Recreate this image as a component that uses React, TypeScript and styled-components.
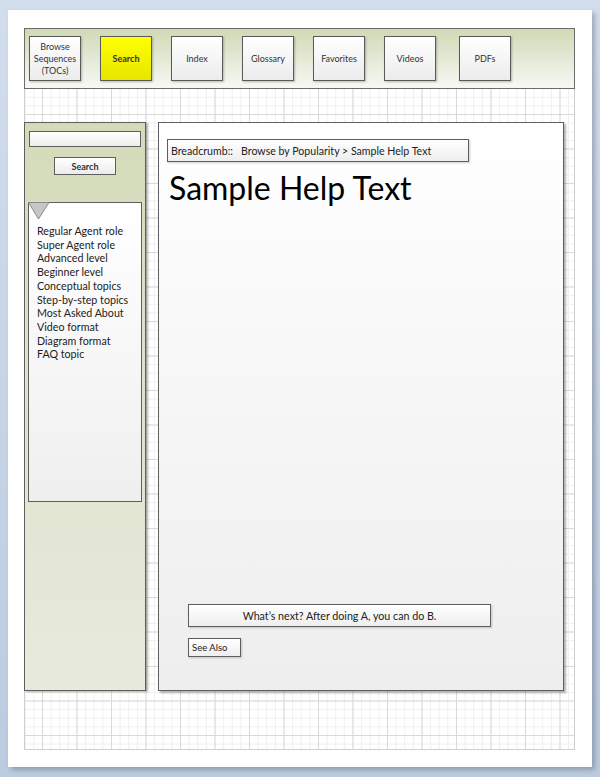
import React from "react";
import styled, { createGlobalStyle } from "styled-components";

const Global = createGlobalStyle`
  html, body { margin: 0; padding: 0; }
  body { font-family: Lato, "Open Sans", "Liberation Sans", sans-serif; }
  * { box-sizing: border-box; }
`;

const Stage = styled.div`
  width: 600px;
  height: 777px;
  padding: 10px 8px 0 8px;
  background: linear-gradient(to bottom, #d2deee, #bccbdf);
  overflow: hidden;
`;

const Paper = styled.div`
  width: 584px;
  height: 757px;
  background: #ffffff;
  padding: 18px 17px 17px 16px;
  box-shadow: 3px 3px 5px rgba(60, 70, 90, 0.35);
`;

const Canvas = styled.div`
  height: 100%;
  display: flex;
  flex-direction: column;
  background-color: #ffffff;
  background-image:
    linear-gradient(to right, #d9d9d9 1px, transparent 1px),
    linear-gradient(to bottom, #d9d9d9 1px, transparent 1px),
    linear-gradient(to right, #efefef 1px, transparent 1px),
    linear-gradient(to bottom, #efefef 1px, transparent 1px);
  background-size: 34.5px 34.5px, 34.5px 34.5px, 8.625px 8.625px, 8.625px 8.625px;
  background-position: 17px 17px;
  border-left: 1px solid #cfcfcf;
  border-right: 1px solid #cfcfcf;
  border-bottom: 1px solid #cfcfcf;
`;

const Toolbar = styled.div`
  height: 61px;
  margin-left: -1px;
  margin-right: -1px;
  border: 1px solid #6b6b6b;
  background: linear-gradient(to bottom, #d0d9b5 0%, #e4e9d6 50%, #f7f8f4 100%);
  display: flex;
  align-items: flex-start;
  padding: 7px 0 0 4px;
  gap: 19px;
`;

const NavButton = styled.div<{ $active?: boolean; $extra?: number }>`
  width: 52px;
  height: 45px;
  margin-left: ${(p) => p.$extra ?? 0}px;
  border: 1px solid #5a5a5a;
  background: ${(p) =>
    p.$active
      ? "linear-gradient(to bottom, #ffff00, #e6e600)"
      : "linear-gradient(to bottom, #ffffff, #ececec)"};
  box-shadow: 1px 1px 2px rgba(0, 0, 0, 0.25);
  display: flex;
  align-items: center;
  justify-content: center;
  text-align: center;
  font-size: 9px;
  line-height: 12px;
  font-weight: ${(p) => (p.$active ? 700 : 400)};
  color: #333333;
`;

const Body = styled.div`
  display: flex;
  margin-top: 33px;
  margin-left: -1px;
  gap: 12px;
  height: 569px;
`;

const Sidebar = styled.div`
  width: 122px;
  height: 100%;
  border: 1px solid #5e5e5e;
  background: linear-gradient(to bottom, #d3dbb9 0%, #dde2c9 40%, #e8eade 100%);
  box-shadow: 2px 1px 2px rgba(0, 0, 0, 0.3);
  display: flex;
  flex-direction: column;
  padding: 8px 3px 0 3px;
`;

const SearchInput = styled.div`
  height: 16px;
  margin: 0 1px;
  border: 1px solid #5e5e5e;
  background: linear-gradient(to bottom, #ffffff, #eeeeee);
`;

const SearchButton = styled.div`
  align-self: center;
  width: 62px;
  height: 18px;
  margin-top: 10px;
  border: 1px solid #5e5e5e;
  background: linear-gradient(to bottom, #ffffff, #ececec);
  display: flex;
  align-items: center;
  justify-content: center;
  font-size: 9px;
  font-weight: 700;
  color: #333333;
`;

const FilterBox = styled.div`
  position: relative;
  margin-top: 27px;
  height: 300px;
  border: 1px solid #5e5e5e;
  background: linear-gradient(to bottom, #ffffff, #efefef);
  padding: 21px 0 0 8px;
`;

const Corner = styled.svg`
  position: absolute;
  left: -1px;
  top: -1px;
`;

const FilterList = styled.ul`
  list-style: none;
  margin: 0;
  padding: 0;
  font-size: 10.7px;
  line-height: 13.7px;
  color: #222222;
`;

const Main = styled.div`
  width: 406px;
  height: 100%;
  border: 1px solid #5e5e5e;
  background: linear-gradient(to bottom, #ffffff 0%, #f6f6f6 50%, #eeeeee 100%);
  box-shadow: 2px 2px 2px rgba(0, 0, 0, 0.3);
  display: flex;
  flex-direction: column;
  padding: 16px 0 0 8px;
`;

const Breadcrumb = styled.div`
  width: 302px;
  height: 23px;
  border: 1px solid #5e5e5e;
  background: linear-gradient(to bottom, #ffffff, #eeeeee);
  box-shadow: 1px 1px 2px rgba(0, 0, 0, 0.2);
  display: flex;
  align-items: center;
  padding-left: 3px;
  font-size: 10.6px;
  color: #222222;
  white-space: pre;
`;

const Title = styled.h1`
  margin: 7px 0 0 2px;
  font-size: 32px;
  line-height: 38px;
  font-weight: 400;
  color: #000000;
`;

const NextBox = styled.div`
  margin-top: auto;
  margin-left: 21px;
  width: 303px;
  height: 23px;
  border: 1px solid #5e5e5e;
  background: linear-gradient(to bottom, #ffffff, #eeeeee);
  box-shadow: 1px 1px 2px rgba(0, 0, 0, 0.2);
  display: flex;
  align-items: center;
  justify-content: center;
  font-size: 10.7px;
  color: #222222;
`;

const SeeAlso = styled.div`
  margin: 11px 0 33px 21px;
  width: 53px;
  height: 19px;
  border: 1px solid #5e5e5e;
  background: linear-gradient(to bottom, #ffffff, #eeeeee);
  box-shadow: 1px 1px 2px rgba(0, 0, 0, 0.2);
  display: flex;
  align-items: center;
  padding-left: 3px;
  font-size: 9.5px;
  color: #222222;
`;

const navItems = [
  { label: "Browse Sequences (TOCs)" },
  { label: "Search", active: true },
  { label: "Index" },
  { label: "Glossary" },
  { label: "Favorites" },
  { label: "Videos" },
  { label: "PDFs", extra: 4 },
];

const filters = [
  "Regular Agent role",
  "Super Agent role",
  "Advanced level",
  "Beginner level",
  "Conceptual topics",
  "Step-by-step topics",
  "Most Asked About",
  "Video format",
  "Diagram format",
  "FAQ topic",
];

export default function App() {
  return (
    <>
      <Global />
      <Stage>
        <Paper>
          <Canvas>
            <Toolbar>
              {navItems.map((n) => (
                <NavButton key={n.label} $active={n.active} $extra={n.extra}>
                  {n.label === "Browse Sequences (TOCs)" ? (
                    <span>
                      Browse
                      <br />
                      Sequences
                      <br />
                      (TOCs)
                    </span>
                  ) : (
                    n.label
                  )}
                </NavButton>
              ))}
            </Toolbar>
            <Body>
              <Sidebar>
                <SearchInput />
                <SearchButton>Search</SearchButton>
                <FilterBox>
                  <Corner width="22" height="18" viewBox="0 0 22 18">
                    <polygon points="0.5,0.5 21,0.5 10.5,17" fill="#c6c6c6" stroke="#8a8a8a" strokeWidth="1" />
                  </Corner>
                  <FilterList>
                    {filters.map((f) => (
                      <li key={f}>{f}</li>
                    ))}
                  </FilterList>
                </FilterBox>
              </Sidebar>
              <Main>
                <Breadcrumb>{"Breadcrumb::   Browse by Popularity > Sample Help Text"}</Breadcrumb>
                <Title>Sample Help Text</Title>
                <NextBox>What’s next? After doing A, you can do B.</NextBox>
                <SeeAlso>See Also</SeeAlso>
              </Main>
            </Body>
          </Canvas>
        </Paper>
      </Stage>
    </>
  );
}
